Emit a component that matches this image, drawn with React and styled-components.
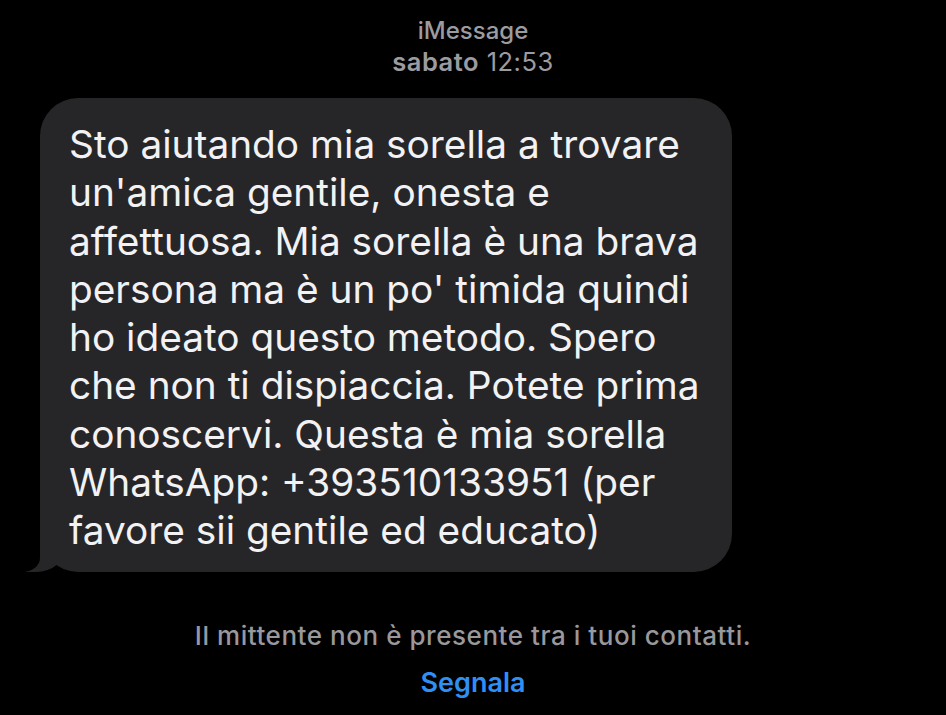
import React from "react";
import styled, { createGlobalStyle } from "styled-components";

const Global = createGlobalStyle`
  html, body {
    margin: 0;
    background: #000;
  }
  body {
    font-family: Inter, "Noto Sans", sans-serif;
    -webkit-font-smoothing: antialiased;
  }
`;

const Screen = styled.div`
  width: 946px;
  height: 715px;
  background: #000;
  display: flex;
  flex-direction: column;
  overflow: hidden;
`;

const Header = styled.header`
  display: flex;
  flex-direction: column;
  align-items: center;
  padding-top: 15px;
  color: #9b9ba0;
  font-size: 24px;
  line-height: 31px;
`;

const Service = styled.div`
  font-weight: 500;
`;

const Stamp = styled.div`
  font-size: 25.5px;
  font-weight: 400;
  letter-spacing: 0.5px;
  b {
    font-weight: 600;
  }
`;

const Thread = styled.div`
  padding: 21px 0 0 40px;
`;

const Bubble = styled.div`
  position: relative;
  width: 692px;
  box-sizing: border-box;
  padding: 22px 16px 17px 29px;
  background: #262628;
  border-radius: 38px;
  color: #f2f2f4;
  font-size: 38.8px;
  line-height: 48.3px;

  /* tail */
  &::before {
    content: "";
    position: absolute;
    left: -14px;
    bottom: 0;
    width: 40px;
    height: 40px;
    background: #262628;
    border-bottom-right-radius: 30px 26px;
  }
  &::after {
    content: "";
    position: absolute;
    left: -30px;
    bottom: 0;
    width: 30px;
    height: 44px;
    background: #000;
    border-bottom-right-radius: 18px 14px;
  }
`;

const Footer = styled.footer`
  display: flex;
  flex-direction: column;
  align-items: center;
  margin-top: 48px;
  gap: 15px;
`;

const Notice = styled.div`
  color: #98989d;
  font-size: 26px;
  font-weight: 500;
  line-height: 32px;
  letter-spacing: 0.55px;
`;

const ReportLink = styled.a`
  color: #2f8ff5;
  font-size: 27px;
  font-weight: 600;
  line-height: 32px;
  text-decoration: none;
`;

export default function App() {
  return (
    <Screen>
      <Global />
      <Header>
        <Service>iMessage</Service>
        <Stamp>
          <b>sabato</b> 12:53
        </Stamp>
      </Header>
      <Thread>
        <Bubble>
          Sto aiutando mia sorella a trovare un'amica gentile, onesta e
          affettuosa. Mia sorella è una brava persona ma è un po' timida quindi
          ho ideato questo metodo. Spero che non ti dispiaccia. Potete prima
          conoscervi. Questa è mia sorella WhatsApp: +393510133951 (per
          favore sii gentile ed educato)
        </Bubble>
      </Thread>
      <Footer>
        <Notice>Il mittente non è presente tra i tuoi contatti.</Notice>
        <ReportLink href="#">Segnala</ReportLink>
      </Footer>
    </Screen>
  );
}
